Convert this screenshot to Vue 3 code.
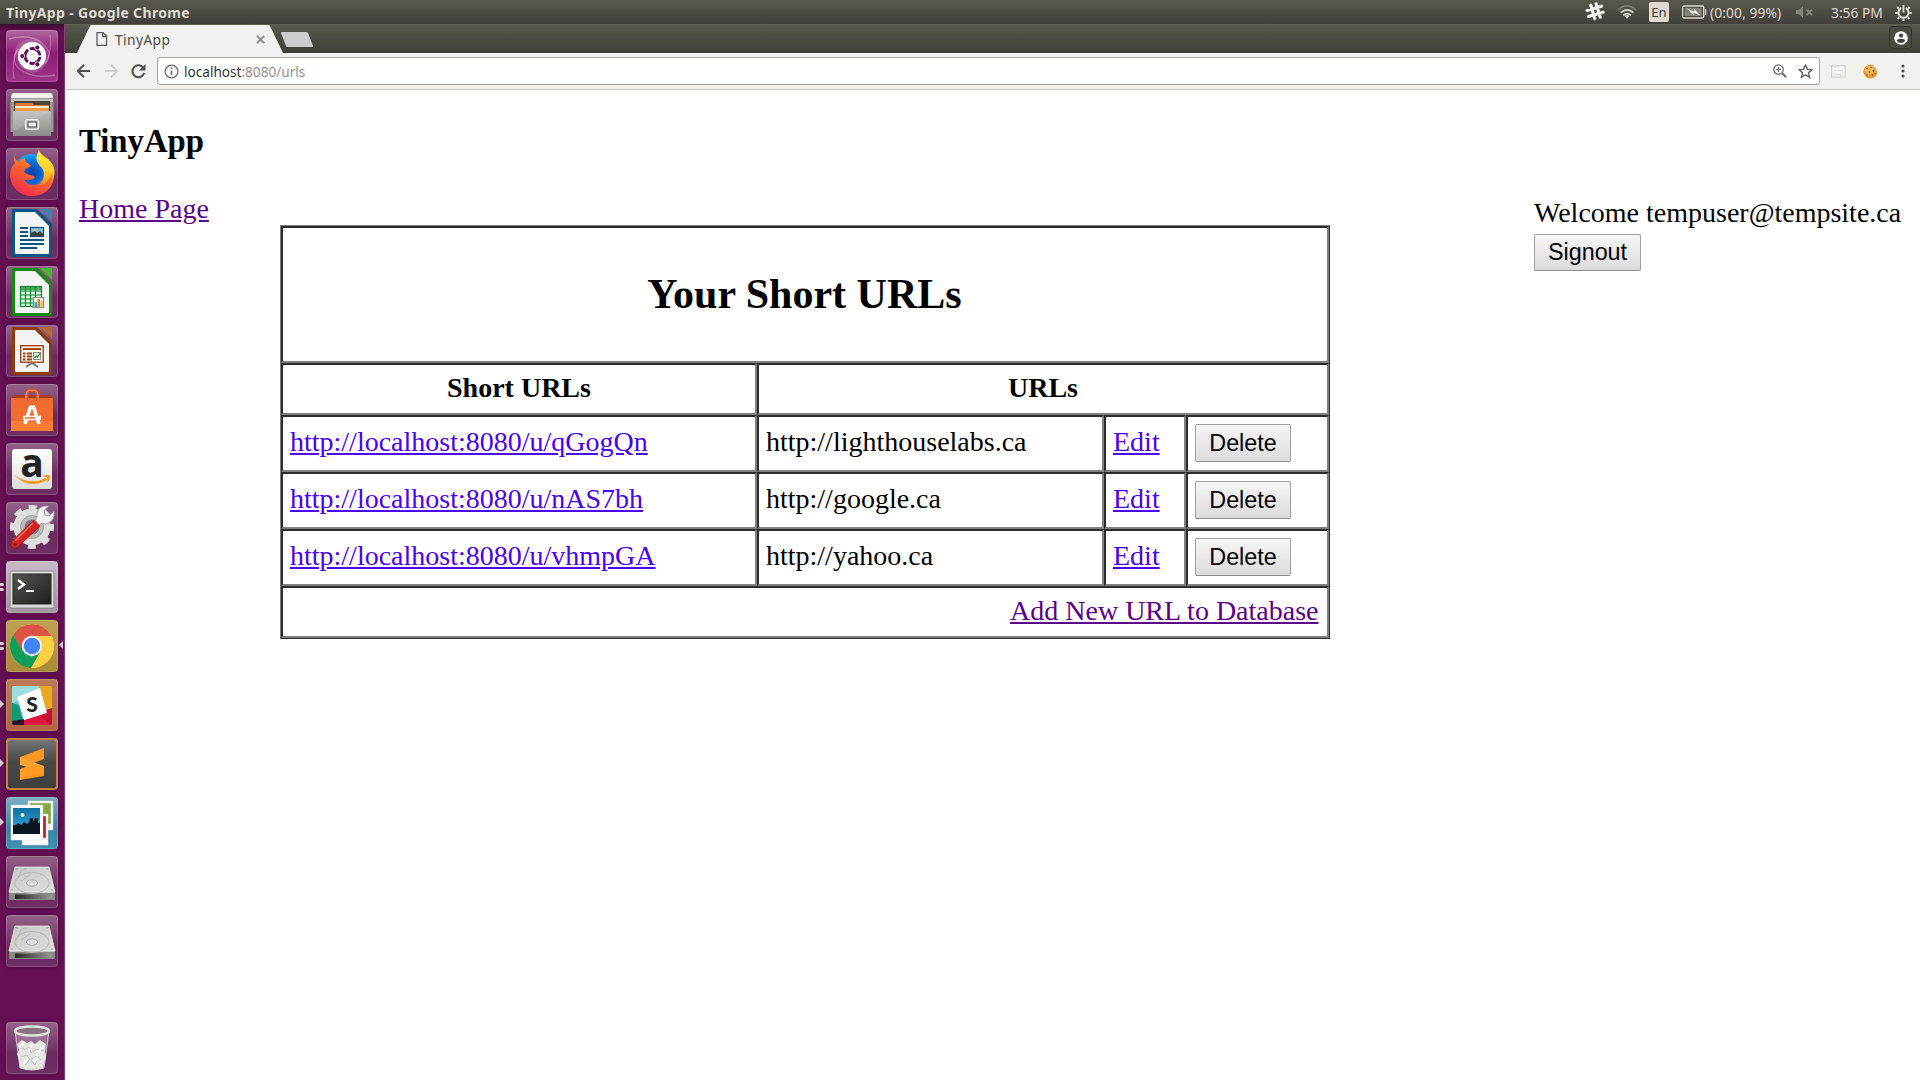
<script setup>
const links = [
  { short: 'http://localhost:8080/u/qGogQn', long: 'http://lighthouselabs.ca' },
  { short: 'http://localhost:8080/u/nAS7bh', long: 'http://google.ca' },
  { short: 'http://localhost:8080/u/vhmpGA', long: 'http://yahoo.ca' },
]
</script>

<template>
  <div class="desktop">
    <header class="panel">
      <span class="window-title">TinyApp - Google Chrome</span>
      <div class="indicators">
        <svg class="i-slack" width="20" height="20" viewBox="0 0 20 20"><g stroke="#f7f5f0" stroke-width="3.1" stroke-linecap="round"><path d="M5.8 3.2l4 13.6M11.2 1.8l4 13.6M2 8.4l14.6-4.2M3.5 14.5l14.6-4.2" /></g></svg>
        <svg class="i-wifi" width="20" height="14" viewBox="0 0 20 14" fill="none" stroke-width="1.7"><path d="M1 4.8Q10-3.2 19 4.8" stroke="#7f7d76" /><path d="M3.6 7.7Q10 1.9 16.4 7.7" stroke="#dfdbd2" /><path d="M6.2 10.3Q10 6.8 13.8 10.3" stroke="#dfdbd2" /><path d="M7.5 11l2.5 2.7L12.5 11Q10 9.2 7.5 11z" fill="#dfdbd2" stroke="none" /></svg>
        <span class="keyboard">En</span>
        <svg class="i-battery" width="25" height="14" viewBox="0 0 25 14"><rect x=".7" y="1" width="21" height="12" rx="1.5" fill="none" stroke="#dfdbd2" stroke-width="1.3" /><rect x="2.7" y="3" width="17" height="8" fill="#85837b" /><path d="M22.5 4.5h1.200v5h-1.200" fill="none" stroke="#dfdbd2" stroke-width="1.2" /><path d="M5 3.500l7 3V4l6.500 6.500-7-2.800V10z" fill="#f2efe9" /></svg>
        <span class="battery-text">(0:00, 99%)</span>
        <svg class="i-mute" width="19" height="12" viewBox="0 0 19 12"><path d="M1 4h3l4-4v12L4 8H1z" fill="#85837b" /><path d="M11.5 3.500l5.500 5.500m0-5.500L11.500 9" stroke="#85837b" stroke-width="1.8" /></svg>
        <span class="clock">3:56 PM</span>
        <svg class="i-gear" width="17" height="17" viewBox="0 0 17 17" fill="none" stroke="#dfdbd2"><path d="M6.200 4a5.100 5.100 0 1 0 4.600 0" stroke-width="2" /><path d="M8.500 1v7.500" stroke-width="1.8" /><path d="M2.800 9H.3m16.400 0h-2.500M4.300 13.200l-1.700 1.700m10.100-1.700l1.700 1.700M8.500 14.500V17M4 4.700L2.300 3M13 4.700L14.700 3" stroke-width="2" /></svg>
      </div>
    </header>

    <div class="workspace">
      <nav class="launcher">
        <div class="tile dash">
          <svg viewBox="0 0 52 52"><g fill="none" stroke="#fff" stroke-opacity=".28"><path d="M3 9Q24 3 36 13T39 34" stroke-width="1.5" /><path d="M49 45Q27 49 15 40T12 19" stroke-width="1.5" /><path d="M44 5q2 17-4 27M8 49q-3-18 4-30" /></g><path d="M4 9Q25 3 38 16q8 10-2 23-10 8-21-2Q5 27 11 15q10-9 25-3-15-8-32-3z" fill="#fff" opacity=".16" /><circle cx="26" cy="26" r="14" fill="#fff" /><circle cx="26.5" cy="26" r="7.5" fill="none" stroke="#5b114f" stroke-width="2.8" stroke-dasharray="13.7 2" stroke-dashoffset="-1" /><g fill="#5b114f" stroke="#fff" stroke-width=".8"><circle cx="16.3" cy="26" r="2.5" /><circle cx="31.3" cy="17.6" r="2.5" /><circle cx="31.3" cy="34.4" r="2.5" /></g></svg>
        </div>
        <div class="tile">
          <svg viewBox="0 0 52 52"><path d="M6 4h40l1.500 9v30h-43V13z" fill="#9a9994" /><path d="M6 4h40l1 5H5z" fill="#f0f0ee" /><path d="M5 10h42v3H5z" fill="#c3c2be" /><path d="M8 12h36v12H8z" fill="#4d4338" /><path d="M10 14h16l2 2h15v8H9v-8z" fill="#d97a36" /><path d="M9 17h34v2H9z" fill="#fbe8cf" /><path d="M9 19h34v3H9z" fill="#ef9b4d" /><path d="M7 22h38v25H7z" fill="url(#metal)" /><path d="M7 22h38L7 42z" fill="#fff" opacity=".12" /><rect x="19.5" y="30.5" width="13" height="10" rx="2" fill="#c8c8c5" stroke="#eee" stroke-width="1.2" /><rect x="22" y="33" width="8.5" height="5" fill="#f3f3f3" stroke="#555" stroke-width="1.2" /></svg>
        </div>
        <div class="tile">
          <svg viewBox="0 0 52 52"><circle cx="26" cy="25" r="19" fill="url(#globe)" /><path d="M8 8q-1 4 1 7-5 5-5 13c1 12 10 20 22 20 13 0 22-9 22-21 0-8-3-12-6-16L34 5l-1 9c8 8 6 22-5 23-6 0-9-3-10-6 4 3 8 0 11-1l-1-2c-3-1-7-1-10-4l1-3 6-3c-1-3-7-3-6-8-4 1-5 3-6 4-2-1-4-3-5-6z" fill="url(#fox)" /><path d="M33 2c-5 9-2 13 3 18 4 6 2 14-4 18 8-2 13-8 14-14 1 5 0 8-1 11 7-11 3-20-5-25-4-2-6-5-7-8z" fill="url(#flame)" /></svg>
        </div>
        <div class="tile">
          <svg viewBox="0 0 52 52"><path d="M7 2h24l15 15v31q0 2-2 2H8q-2 0-2-2V4q0-2 1-2z" fill="#0b5583" /><path d="M34 2h12v12z" fill="#3c83ad" /><path d="M9 5h20l14 14v28H9z" fill="#f4f4f4" /><g stroke="#0b5583" stroke-width="1.8"><path d="M14 21h8m-8 4h8m-8 4h8m-8 4h24m-24 4h24m-24 4h17" /></g><rect x="24.5" y="20.5" width="13" height="9" fill="#7fc1e4" stroke="#0b4d78" stroke-width="1.2" /><path d="M25 29v-3l4-2 2 2 3-2 3 3v2z" fill="#3e4435" /><circle cx="29" cy="23" r="1.3" fill="#f3c54b" /></svg>
        </div>
        <div class="tile">
          <svg viewBox="0 0 52 52"><path d="M7 2h24l15 15v31q0 2-2 2H8q-2 0-2-2V4q0-2 1-2z" fill="#178a11" /><path d="M34 2h12v12z" fill="#43b92f" /><path d="M9 5h20l14 14v28H9z" fill="#f4f4f4" /><rect x="14.5" y="20.5" width="21" height="20" fill="#d8f3d8" stroke="#118833" stroke-width="1.2" /><path d="M14 21h22v3H14z" fill="#118833" opacity=".7" /><path d="M19.5 20v21m5-21v21m5-21v21M14 25h22m-22 4h22m-22 4h22m-22 4h22" stroke="#118833" stroke-width="1.2" /><rect x="27.5" y="31.5" width="10" height="10" fill="#fff" stroke="#888" /><path d="M28.5 36h2.500v5h-2.500z" fill="#2da0da" /><path d="M31.5 33h2.500v8h-2.500z" fill="#ec7928" /><path d="M34.5 35h2v6h-2z" fill="#e8b32d" /></svg>
        </div>
        <div class="tile">
          <svg viewBox="0 0 52 52"><path d="M7 2h24l15 15v31q0 2-2 2H8q-2 0-2-2V4q0-2 1-2z" fill="#8a3c0c" /><path d="M34 2h12v12z" fill="#b8673a" /><path d="M9 5h20l14 14v28H9z" fill="#f4f4f4" /><rect x="14.7" y="20.7" width="22.5" height="16.5" fill="#fff5ee" stroke="#a14515" stroke-width="1.4" /><path d="M17 24h18" stroke="#a14515" stroke-width="2" /><path d="M17 28.500h2.500m-2.500 3h2.500m-2.500 3h2.500m1.500-6h5m-5 3h5m-5 3h5" stroke="#9b4416" stroke-width="2" /><rect x="27.5" y="27.5" width="7" height="7" fill="#e1f5df" stroke="#888" /><path d="M28.5 33l2-2 1 1 3-4" stroke="#27922d" fill="none" stroke-width="1.2" /><path d="M26 38v1m-6 3l6-4 6 4" fill="none" stroke="#777" stroke-width="2" /></svg>
        </div>
        <div class="tile">
          <svg viewBox="0 0 52 52"><path d="M5 14l3-3h36l3 3v33H5z" fill="#f06c30" /><path d="M5 14l3-3h36l3 3z" fill="#a63f17" /><path d="M5 37h42v10H5z" fill="#ff7b35" /><path d="M20.5 17v-6q0-5 5.500-5t5.500 5v6" fill="none" stroke="#d6582a" stroke-width="3.5" /><path d="M20 17v-6q0-5 6-5t6 5v6" fill="none" stroke="#f9986d" stroke-width="1" /><path d="M19 40l5.500-17h3L33 40" fill="none" stroke="#fff" stroke-width="3.6" /><path d="M17 34h18" stroke="#fff" stroke-width="4.5" /><path d="M19 34h10" stroke="#f06c30" stroke-width="1.5" /></svg>
        </div>
        <div class="tile">
          <svg viewBox="0 0 52 52"><rect x="6" y="6" width="40" height="40" rx="3" fill="url(#paper)" /><text x="26" y="33.5" text-anchor="middle" font-family="Open Sans, sans-serif" font-weight="700" font-size="39" fill="#222">a</text><path d="M8 32q16 11 32 3l1 2Q23 47 8 32z" fill="#f79717" /><path d="M36 33q7-2 8 0 0 4-3 7 1-4 0-5.500-2-1-5-1.500z" fill="#f79717" /></svg>
        </div>
        <div class="tile">
          <svg viewBox="0 0 52 52"><circle cx="26" cy="25" r="14.5" fill="none" stroke="#dededd" stroke-width="8" /><circle cx="26" cy="25" r="19.7" fill="none" stroke="#dededd" stroke-width="4.6" stroke-dasharray="8 7.47" stroke-dashoffset="4" /><circle cx="26" cy="25" r="11.5" fill="#b9b9b8" stroke="#a5a5a5" /><circle cx="26" cy="25" r="7.5" fill="#87708a" /><path d="M31 14q-1-8 7-10l5 0-5 5 1 4 4 1 5-5q1 9-5 12-4 2-7 0l-4 4-4-4z" fill="#f0f0f0" stroke="#888" stroke-width=".8" /><path d="M28 18l6 6L13 44q-4 4-7 1t1-7z" fill="#d6231e" stroke="#8c1814" stroke-width=".7" /><path d="M27 21L9 39" stroke="#f3736c" stroke-width="1.5" /><circle cx="9.3" cy="42.2" r="1.5" fill="#701b18" /></svg>
        </div>
        <div class="tile terminal">
          <i class="pips"></i>
          <svg viewBox="0 0 52 52"><rect x="4" y="10" width="44" height="37" rx="1.5" fill="#dcdcda" stroke="#777" stroke-width=".8" /><rect x="7" y="13" width="38" height="30" fill="url(#screen)" stroke="#222" /><path d="M12 19l6 4.500-6 4.500" fill="none" stroke="#fff" stroke-width="2.4" /><path d="M20 30h8" stroke="#fff" stroke-width="2" /></svg>
        </div>
        <div class="tile chrome">
          <i class="pips"></i>
          <i class="focus"></i>
          <svg viewBox="0 0 52 52"><circle cx="26" cy="26" r="22" fill="#fdcf43" /><path d="M26 16h19.500A22 22 0 0 0 7 15l9 15z" fill="#db5547" /><path d="M7 15A22 22 0 0 0 25 48l10-17-9-5-9 5z" fill="#119e5a" /><path d="M35 31L25.500 48A22 22 0 0 0 45.500 16H26z" fill="#fdcf43" /><circle cx="26" cy="26" r="10.2" fill="#f4f4f4" /><circle cx="26" cy="26" r="8.2" fill="#4384f4" /></svg>
        </div>
        <div class="tile slack">
          <i class="arrow"></i>
          <svg viewBox="0 0 52 52"><clipPath id="slackbox"><rect x="6" y="7" width="40" height="39" rx="2" /></clipPath><g clip-path="url(#slackbox)"><path d="M0 0h52v52H0z" fill="#6cc5ce" /><path d="M6 7h27l-3 9-24 8z" fill="#9bdcdf" /><path d="M33 5h16v25H36z" fill="#e9a820" /><path d="M6 24l7 2 4 16-11 5z" fill="#139b78" /><path d="M6 42l12-2 3 8H6z" fill="#271429" /><path d="M18 41l30-10v18H18z" fill="#e11542" /><path d="M32 34l14-5v18z" fill="#c90d2e" /></g><path d="M11 18l23-9 7 25-23 7z" fill="#fff" /><text x="26" y="33" text-anchor="middle" font-family="Lato, sans-serif" font-weight="900" font-size="21" fill="#222">S</text></svg>
        </div>
        <div class="tile sublime">
          <i class="arrow"></i>
          <svg viewBox="0 0 52 52"><path d="M14 19l24-9v11l-13 5 13 4v8l-24 4V31l13-4-13-4z" fill="#f79620" /><path d="M14 19v8l17 5 7-2v-2l-14-5z" fill="#fba531" /><path d="M14 31l14-4 10 3v5l-24 6z" fill="#ff9b24" /></svg>
        </div>
        <div class="tile photos">
          <i class="arrow"></i>
          <svg viewBox="0 0 52 52"><g stroke="#d5d5cf" stroke-width=".5"><path d="M22 4h25v29H22z" fill="#fff" /><path d="M24 6h21v21H24z" fill="#85a842" /><path d="M16 17h26v31H16z" fill="#fff" /><path d="M18 19h22v22H18z" fill="#b51d1d" /><path d="M5 8h32v35H5z" fill="#fff" /></g><path d="M7 11h27v26H7z" fill="url(#sea)" /><path d="M7 28h3l2-2 3 2 3-3 3 2 2-2 1-4h3v4l2-4h3v5h2v11H7z" fill="#08161f" /><circle cx="16.5" cy="18" r="2" fill="#ffeeb0" /></svg>
        </div>
        <div v-for="n in 2" :key="n" class="tile">
          <svg viewBox="0 0 52 52"><path d="M9 11h34l6 25v7q0 1-1 1H4q-1 0-1-1v-7z" fill="#b9b9b7" /><path d="M9 11h34l6 25H3z" fill="url(#disk)" stroke="#eee" stroke-width=".7" /><path d="M3 37h46v7H3z" fill="#898988" /><path d="M9 38.500h37v4.500H9z" fill="url(#slot)" /><ellipse cx="26" cy="27" rx="17" ry="10.5" fill="none" stroke="#b7b7b5" /><ellipse cx="26" cy="27" rx="5.5" ry="3.2" fill="#ddd" stroke="#aaa" /><path d="M21 13q-6 0-7 4t-4 8M24 19l-9 6" stroke="#b7b7b5" fill="none" /><g fill="#888"><circle cx="11" cy="13" r=".7" /><circle cx="41" cy="13" r=".7" /><circle cx="6" cy="34" r=".7" /><circle cx="46" cy="34" r=".7" /></g></svg>
        </div>
        <div class="tile trash">
          <svg viewBox="0 0 52 52"><path d="M9 9l5 37q12 4 24 0l5-37z" fill="#eee" fill-opacity=".25" stroke="#ddd" stroke-width=".8" /><path d="M11 22l5-4 5 3 4-2 4 3 5-4 6 4-1 7 1 6-3 11q-11 4-23 0l-1-8-2-6 2-4z" fill="#e4e4e0" /><path d="M14 22l4 6 5-3 2 6 6-4 7 2m-23 6l6-2 3 5 6-4 5 4m-16 5l5-6 5 6 3-8" fill="none" stroke="#c0bfbb" /><path d="M13 25l5-4m4 8l5-7m3 12l6-9m-19 17l5-5m6 3l4-4" stroke="#fff" stroke-width="2" /><ellipse cx="26" cy="9" rx="17" ry="4.5" fill="#88727f" stroke="#e2e2e0" stroke-width="2.6" /></svg>
        </div>
        <svg class="defs" width="0" height="0">
          <defs>
            <linearGradient id="metal" x2="0" y2="1"><stop stop-color="#bdbdbb" /><stop offset="1" stop-color="#8b8b88" /></linearGradient>
            <radialGradient id="globe"><stop stop-color="#0b3c9b" /><stop offset=".6" stop-color="#0a70df" /><stop offset="1" stop-color="#19a7ef" /></radialGradient>
            <linearGradient id="fox" x1=".8" x2=".2" y2="1"><stop stop-color="#ffb222" /><stop offset=".45" stop-color="#ff6a27" /><stop offset="1" stop-color="#f02553" /></linearGradient>
            <linearGradient id="flame" x2="0" y2="1"><stop stop-color="#fff14b" /><stop offset=".6" stop-color="#ffcc28" /><stop offset="1" stop-color="#ff8c1d" /></linearGradient>
            <linearGradient id="paper" x2="0" y2="1"><stop stop-color="#fff" /><stop offset="1" stop-color="#dcdcdc" /></linearGradient>
            <linearGradient id="screen" x2="1" y2="1"><stop stop-color="#55554f" /><stop offset="1" stop-color="#1e1e1c" /></linearGradient>
            <linearGradient id="sea" x2="0" y2="1"><stop stop-color="#0d6fa4" /><stop offset="1" stop-color="#36b4dd" /></linearGradient>
            <linearGradient id="disk" x2="1" y2="1"><stop stop-color="#c7c7c5" /><stop offset="1" stop-color="#dededc" /></linearGradient>
            <linearGradient id="slot"><stop stop-color="#262626" /><stop offset="1" stop-color="#999" /></linearGradient>
          </defs>
        </svg>
      </nav>

      <div class="browser">
        <div class="tabstrip">
          <svg class="tab-shape" width="206" height="29" viewBox="0 0 206 29"><path d="M0 29L13 2q.5-1 2-1h176q1.500 0 2 1l13 27z" fill="#f2f1f0" /></svg>
          <div class="tab">
            <svg width="12" height="14" viewBox="0 0 12 14" fill="none" stroke="#5a5a5a" stroke-width="1.3"><path d="M1 .7h6L10.500 4v9.300H1z" /><path d="M6.700 1v3.500h3.800" /></svg>
            <span class="tab-title">TinyApp</span>
            <svg class="tab-close" width="9" height="9" viewBox="0 0 9 9"><path d="M.8.8l7.400 7.400m0-7.400L.8 8.200" stroke="#8b8a88" stroke-width="1.7" /></svg>
          </div>
          <svg class="new-tab" width="34" height="16" viewBox="0 0 34 16"><path d="M2 0h24q1.500 0 2 1l5 13q.3 1-1 1H8q-1.500 0-2-1L1 1Q.7 0 2 0z" fill="#cfcdcc" /></svg>
          <span class="profile"><svg width="14" height="14" viewBox="0 0 14 14"><circle cx="7" cy="7" r="6.8" fill="#fff" /><circle cx="7" cy="4.6" r="2.1" fill="#45443f" /><path d="M2.800 9.700q0-2 4.200-2t4.200 2Q9.500 12 7 12T2.800 9.700z" fill="#45443f" /></svg></span>
        </div>
        <div class="toolbar">
          <svg class="back" width="15" height="14" viewBox="0 0 15 14" fill="none" stroke="#505050" stroke-width="2"><path d="M14 7H2m6-6.200L1.800 7 8 13.200" /></svg>
          <svg class="forward" width="15" height="14" viewBox="0 0 15 14" fill="none" stroke="#cfcecd" stroke-width="2"><path d="M1 7h12M7 .8L13.200 7 7 13.200" /></svg>
          <svg class="reload" width="15" height="15" viewBox="0 0 15 15"><path d="M12.500 4A6 6 0 1 0 13.200 9" fill="none" stroke="#505050" stroke-width="2.1" /><path d="M14.500 0v6.500H8z" fill="#505050" /></svg>
          <div class="omnibox">
            <svg width="15" height="15" viewBox="0 0 15 15"><circle cx="7.5" cy="7.5" r="6.4" fill="none" stroke="#6e6e6e" stroke-width="1.3" /><path d="M7.500 6.400v4.800M7.500 3.600v1.700" stroke="#6e6e6e" stroke-width="1.7" /></svg>
            <span class="url">localhost<span class="muted">:8080/urls</span></span>
            <svg class="i-zoom" width="14" height="14" viewBox="0 0 14 14" fill="none" stroke="#6b6b6b"><circle cx="5.5" cy="5.5" r="4.7" stroke-width="1.3" /><path d="M9 9l4 4" stroke-width="2" /><path d="M5.500 3v5M3 5.500h5" stroke-width="1.2" /></svg>
            <svg class="i-star" width="15" height="15" viewBox="0 0 15 15"><path d="M7.500 1.200l1.900 4.200 4.600.4-3.500 3 1.100 4.500-4.100-2.400-4.100 2.400 1.100-4.500L1 5.800l4.600-.4z" fill="none" stroke="#5f5f5f" stroke-width="1.4" /></svg>
          </div>
          <svg class="ext" width="15" height="13" viewBox="0 0 15 13"><rect x=".6" y=".6" width="13.5" height="11.5" fill="#f7f7f7" stroke="#d2d2d2" stroke-width="1.2" /><path d="M1 2h8" stroke="#d9d9d9" /><path d="M3 5.500h9M3 9.500h9" stroke="#d4d4d4" stroke-dasharray="2 .5" /></svg>
          <svg class="cookie" width="15" height="15" viewBox="0 0 15 15"><path d="M6 .7a7 7 0 1 0 8.500 6.800l-2-1.200.8-2L11 3.800 9.500.8z" fill="#e49a35" /><circle cx="6.5" cy="6.2" r="4.5" fill="#f5bd5c" opacity=".8" /><g fill="#7b4a1c"><circle cx="4" cy="4.5" r=".8" /><circle cx="8" cy="3.5" r=".8" /><circle cx="6.5" cy="8" r=".8" /><circle cx="10.5" cy="7" r=".9" /><circle cx="4" cy="11" r=".8" /><circle cx="9.5" cy="11" r=".8" /><circle cx="12" cy="9.5" r=".6" /></g></svg>
          <svg class="menu" width="4" height="14" viewBox="0 0 4 14" fill="#4d4d4d"><circle cx="2" cy="2" r="1.6" /><circle cx="2" cy="7" r="1.6" /><circle cx="2" cy="12" r="1.6" /></svg>
        </div>

        <main class="page">
          <h3>TinyApp</h3>
          <div class="columns">
            <div class="home"><a class="visited" href="#">Home Page</a></div>
            <div class="table">
              <div class="cell full title"><h2>Your Short URLs</h2></div>
              <div class="cell head">Short URLs</div>
              <div class="cell head span3">URLs</div>
              <template v-for="link in links" :key="link.short">
                <div class="cell"><a class="fresh" href="#">{{ link.short }}</a></div>
                <div class="cell">{{ link.long }}</div>
                <div class="cell"><a class="fresh" href="#">Edit</a></div>
                <div class="cell action"><button class="delete">Delete</button></div>
              </template>
              <div class="cell full add"><a class="visited" href="#">Add New URL to Database</a></div>
            </div>
            <div class="user">
              <div>Welcome tempuser@tempsite.ca</div>
              <button class="signout">Signout</button>
            </div>
          </div>
        </main>
      </div>
    </div>
  </div>
</template>

<style>
body {
  margin: 0;
  overflow: hidden;
}
</style>

<style scoped>
.desktop {
  width: 1920px;
  height: 1080px;
  display: flex;
  flex-direction: column;
  overflow: hidden;
  background: #fff;
  font-family: "Noto Sans", "Open Sans", sans-serif;
}
svg {
  display: block;
  flex: none;
}
.panel {
  height: 24px;
  flex: none;
  display: flex;
  align-items: center;
  justify-content: space-between;
  padding: 0 8px 0 6px;
  box-sizing: border-box;
  background: linear-gradient(#5a584e, #403f3a);
  color: #dfdbd2;
  font-size: 13.8px;
  white-space: nowrap;
}
.window-title {
  font-size: 14px;
  font-weight: 700;
  letter-spacing: 0.35px;
}
.indicators {
  display: flex;
  align-items: center;
}
.i-wifi { margin-left: 12px; }
.keyboard {
  width: 20px;
  height: 20px;
  margin-left: 12px;
  background: #dfdbd2;
  border-radius: 2px;
  color: #3c3b37;
  font-size: 13px;
  line-height: 21px;
  text-align: center;
}
.i-battery { margin-left: 13px; }
.battery-text { margin-left: 3px; width: 73px; letter-spacing: 0.1px; }
.i-mute { margin-left: 12px; }
.clock { margin-left: 17px; width: 52px; }
.i-gear { margin-left: 12px; }
.workspace {
  flex: 1;
  display: flex;
  min-height: 0;
}
.launcher {
  position: relative;
  z-index: 1;
  width: 65px;
  flex: none;
  box-sizing: border-box;
  padding: 6px 0 6px 6px;
  display: flex;
  flex-direction: column;
  gap: 7px;
  background: linear-gradient(#3c0c33 0, #651053 7px, #651053);
  border-right: 1px solid #843e76;
}
.tile {
  position: relative;
  width: 52px;
  height: 52px;
  flex: none;
  border-radius: 4px;
  background: linear-gradient(#946289 0, #7a3f6e 40%, #6b2a5e 60%, #702f64);
  box-shadow: inset 0 0 0 1px rgba(255, 255, 255, 0.17), 0 0 4px rgba(30, 0, 25, 0.35);
}
.tile svg { width: 52px; height: 52px; overflow: visible; }
.dash { background: linear-gradient(#b0679f, #8f1c78 45%, #9b3688); }
.terminal { background: linear-gradient(#c9bbc7, #a594a2); }
.chrome { background: linear-gradient(#bfa156, #a98a37); }
.slack { background: linear-gradient(#bd7b59, #b0653d); }
.sublime {
  background: linear-gradient(#77787a, #484848 45%, #3e3e3e);
  box-shadow: inset 0 0 0 2px #c58340, 0 0 4px rgba(30, 0, 25, 0.35);
}
.photos { background: linear-gradient(#7eafc4, #3984a5 60%, #4390b1); }
.trash { margin-top: auto; }
.defs { position: absolute; }
.pips::before,
.pips::after {
  content: "";
  position: absolute;
  left: -6px;
  top: 22px;
  width: 4px;
  height: 3px;
  border-radius: 0 2px 2px 0;
  background: #d9ccd7;
}
.pips::after { top: 27px; }
.arrow,
.focus {
  position: absolute;
  top: 21px;
  left: -6px;
  border: 4.5px solid transparent;
  border-left-color: #d9ccd7;
  border-right: 0;
}
.focus {
  left: 53px;
  border-left: 0;
  border-right: 4.5px solid #d9ccd7;
}
.browser {
  flex: 1;
  min-width: 0;
  display: flex;
  flex-direction: column;
}
.tabstrip {
  position: relative;
  height: 29px;
  flex: none;
  box-sizing: border-box;
  display: flex;
  padding: 0 8px 0 12px;
  background: linear-gradient(#6a6859 0, #58574c 1px, #3f3e39);
}
.tab-shape { position: absolute; left: 12px; top: 0; }
.tab {
  position: relative;
  width: 206px;
  box-sizing: border-box;
  display: flex;
  align-items: center;
  padding: 1px 18px 0 19px;
}
.tab-title {
  flex: 1;
  margin-left: 7px;
  font-size: 13.8px;
  letter-spacing: 0.4px;
  color: #4c4c4c;
}
.new-tab { margin: 8px 0 0 -3px; }
.profile {
  margin: 2px 0 0 auto;
  width: 23px;
  height: 23px;
  border: 1px solid #37362f;
  border-radius: 4px;
  box-sizing: border-box;
  display: grid;
  place-items: center;
  background: #4b4a42;
}
.toolbar {
  height: 37px;
  flex: none;
  box-sizing: border-box;
  display: flex;
  align-items: center;
  padding: 0 15px 0 11px;
  background: #f2f1f0;
  border-bottom: 1px solid #c9c7c5;
}
.forward { margin-left: 13px; }
.reload { margin-left: 12px; }
.omnibox {
  flex: 1;
  height: 28px;
  box-sizing: border-box;
  margin: 0 11px;
  padding: 0 6px;
  display: flex;
  align-items: center;
  background: #fff;
  border: 1px solid #a8a6a4;
  border-radius: 3px;
}
.url {
  flex: 1;
  margin-left: 5px;
  font-size: 13.6px;
  color: #333;
}
.muted { color: #919191; }
.i-star { margin-left: 11px; }
.cookie { margin-left: 17px; }
.menu { margin-left: 23px; }
.page {
  flex: 1;
  padding: 32px 0 0 14px;
  font-family: "Liberation Serif", "Times New Roman", serif;
  font-size: 28px;
  line-height: 32px;
  color: #000;
  white-space: nowrap;
}
h3 {
  margin: 0 0 33px;
  font-size: 32.76px;
  line-height: 38px;
}
h2 {
  margin: 0;
  font-size: 42px;
  line-height: 48px;
}
.columns {
  display: flex;
  align-items: flex-start;
}
.home { width: 201px; }
a { text-decoration: underline; }
.visited { color: #5b0089; }
.fresh { color: #4b00ee; }
.table {
  width: 1050px;
  flex: none;
  box-sizing: border-box;
  margin-top: 32px;
  display: grid;
  grid-template-columns: 476px 347px 82px 143px;
  grid-template-rows: 137px 52px repeat(3, 57px) 52px;
  border: 1px solid;
  border-color: #808080 #2c2c2c #2c2c2c #808080;
}
.cell {
  box-sizing: border-box;
  display: flex;
  align-items: flex-start;
  padding: 9px 7px 0;
  border: 2px solid;
  border-color: #2c2c2c #808080 #808080 #2c2c2c;
}
.full { grid-column: 1 / -1; }
.span3 { grid-column: span 3; }
.title {
  justify-content: center;
  padding: 42px 8px 0 7px;
}
.head {
  justify-content: center;
  padding-top: 7px;
  font-weight: 700;
}
.action { padding-top: 7px; }
.add {
  justify-content: flex-end;
  padding: 7px 8.5px 0 7px;
}
.user { margin: 4px 0 0 204px; }
button {
  display: block;
  box-sizing: border-box;
  padding: 0;
  border: 1px solid #a0a0a0;
  border-bottom-color: #8c8c8c;
  border-radius: 2px;
  background: linear-gradient(#f6f6f6, #dcdcdc);
  color: #000;
  font-family: "Liberation Sans", Arial, sans-serif;
  font-size: 23.33px;
  line-height: 26px;
}
.delete { width: 96px; height: 38px; }
.signout { width: 107px; height: 37px; margin-top: 5px; padding-bottom: 2px; }
</style>
